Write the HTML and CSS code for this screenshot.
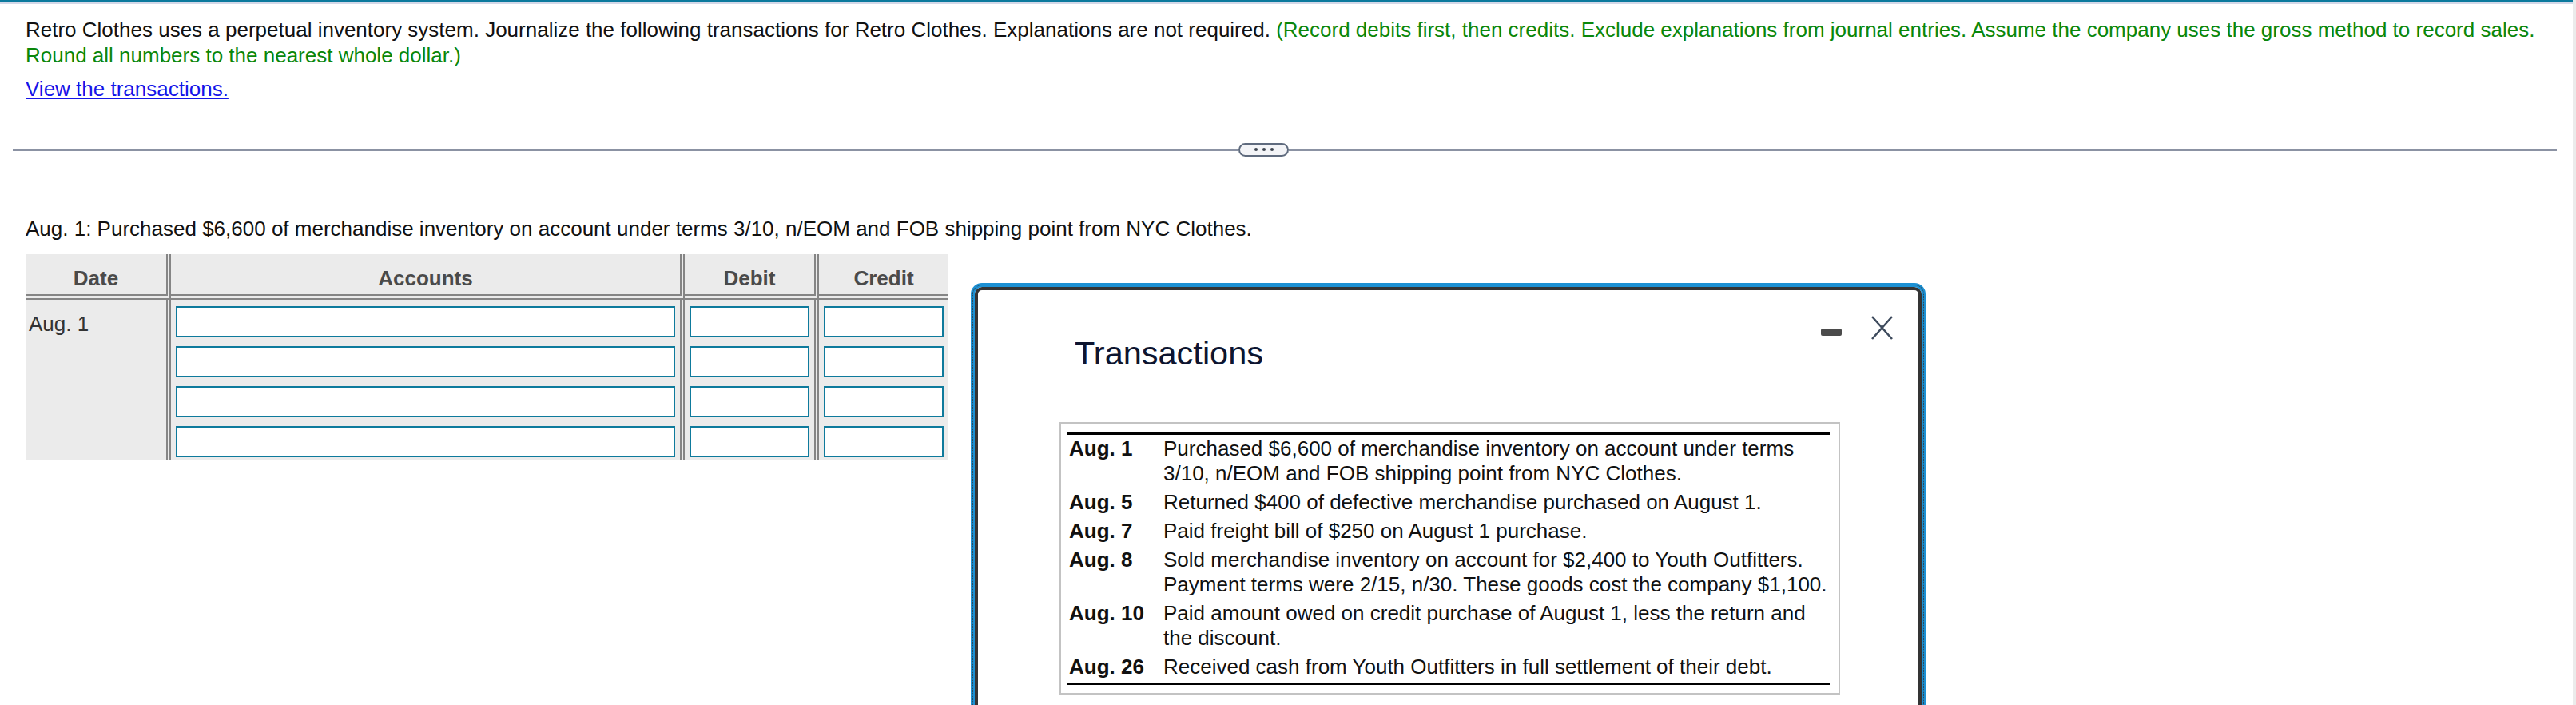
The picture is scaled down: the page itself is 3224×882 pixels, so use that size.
FILE: index.html
```html
<!DOCTYPE html>
<html>
    <head>
        <meta charset="UTF-8">
        <title>Retro Clothes</title>
        <link rel="stylesheet" href="styles.css">
    </head>
    <body>
        <div class="frame">
            <div class="main">
                <div class="topbar"></div>
                <div class="page">
                    <p class="intro">Retro Clothes uses a perpetual inventory system. Journalize the following transactions for Retro Clothes. Explanations are not required. <span class="hint">(Record debits first, then credits. Exclude explanations from journal entries. Assume the company uses the gross method to record sales. Round all numbers to the nearest whole dollar.)</span></p>
                    <p class="viewlink"><a href="#">View the transactions.</a></p>

                    <div class="divider">
                        <span class="divider-line left"></span>
                        <span class="more"><i></i><i></i><i></i></span>
                        <span class="divider-line right"></span>
                    </div>

                    <p class="question">Aug. 1: Purchased $6,600 of merchandise inventory on account under terms 3/10, n/EOM and FOB shipping point from NYC Clothes.</p>

                    <table class="journal">
                        <thead>
                            <tr>
                                <th class="c-date">Date</th>
                                <th class="c-acct">Accounts</th>
                                <th class="c-debit">Debit</th>
                                <th class="c-credit">Credit</th>
                            </tr>
                        </thead>
                        <tbody>
                            <tr>
                                <td class="date-cell" rowspan="4">Aug. 1</td>
                                <td><input type="text"></td>
                                <td><input type="text"></td>
                                <td class="last"><input type="text"></td>
                            </tr>
                            <tr>
                                <td><input type="text"></td>
                                <td><input type="text"></td>
                                <td class="last"><input type="text"></td>
                            </tr>
                            <tr>
                                <td><input type="text"></td>
                                <td><input type="text"></td>
                                <td class="last"><input type="text"></td>
                            </tr>
                            <tr>
                                <td><input type="text"></td>
                                <td><input type="text"></td>
                                <td class="last"><input type="text"></td>
                            </tr>
                        </tbody>
                    </table>
                </div>
            </div>
            <div class="track"></div>
        </div>

        <!-- popup window -->
        <div class="dialog">
            <div class="dialog-head">
                <h2 class="dialog-title">Transactions</h2>
                <div class="win-ctl">
                    <span class="minimize"></span>
                    <svg class="close" width="31" height="30" viewBox="0 0 31 30">
                        <path d="M3 1 L28 29 M28 1 L3 29" stroke="#3e4b5d" stroke-width="2.6" fill="none"/>
                    </svg>
                </div>
            </div>
            <div class="tx-box">
                <table class="tx-list">
                    <tr><td class="tx-date">Aug. 1</td><td>Purchased $6,600 of merchandise inventory on account under terms<br>3/10, n/EOM and FOB shipping point from NYC Clothes.</td></tr>
                    <tr><td class="tx-date">Aug. 5</td><td>Returned $400 of defective merchandise purchased on August 1.</td></tr>
                    <tr><td class="tx-date">Aug. 7</td><td>Paid freight bill of $250 on August 1 purchase.</td></tr>
                    <tr><td class="tx-date">Aug. 8</td><td>Sold merchandise inventory on account for $2,400 to Youth Outfitters.<br>Payment terms were 2/15, n/30. These goods cost the company $1,100.</td></tr>
                    <tr><td class="tx-date">Aug. 10</td><td>Paid amount owed on credit purchase of August 1, less the return and<br>the discount.</td></tr>
                    <tr><td class="tx-date">Aug. 26</td><td>Received cash from Youth Outfitters in full settlement of their debt.</td></tr>
                </table>
            </div>
        </div>
    </body>
</html>
```

FILE: styles.css
```css
html, body{
    margin: 0;
    padding: 0;
}
body{
    font-family: "Liberation Sans", Arial, Helvetica, sans-serif;
    color: #111;
    background: #fff;
    height: 882px;
    overflow: hidden;
    position: relative;
}
.frame{
    display: flex;
    min-height: 882px;
}
.main{
    flex: 1;
}
.track{
    width: 4px;
    background: #ebebeb;
}
.topbar{
    height: 3px;
    background: #0b7a9d;
    border-bottom: 2px solid #d3d8e8;
}
.page{
    padding: 16px 20px 0 32px;
    font-size: 26px;
}
.intro{
    margin: 0;
    line-height: 32px;
}
.hint{
    color: #0a870a;
}
.viewlink{
    margin: 10px 0 0;
    line-height: 32px;
}
.viewlink a{
    color: #1515e8;
}

/* divider with the "..." pill */
.divider{
    display: flex;
    align-items: center;
    height: 16px;
    margin: 52px 0 0 -16px;
}
.divider-line{
    height: 3px;
    background: #8b92a3;
}
.divider-line.left{
    width: 1534px;
}
.divider-line.right{
    flex: 1;
}
.more{
    width: 63px;
    height: 17px;
    box-sizing: border-box;
    border: 2px solid #5f6b7e;
    border-radius: 9px;
    background: #f3f4f7;
    display: flex;
    justify-content: center;
    align-items: center;
    gap: 6px;
}
.more i{
    width: 4px;
    height: 4px;
    border-radius: 50%;
    background: #3f4652;
}
.question{
    margin: 75px 0 0;
    line-height: 32px;
}

/* journal table */
.journal{
    margin-top: 16px;
    border-collapse: separate;
    border-spacing: 0;
    table-layout: fixed;
    width: 1155px;
    background: #ebebeb;
    font-size: 26px;
}
.journal th, .journal td{
    box-sizing: border-box;
    border-right: 6px double #858585;
    padding: 0;
}
.journal th{
    height: 57px;
    padding-top: 10px;
    border-bottom: 7px double #858585;
    color: #4a4a4a;
    font-weight: bold;
    text-align: center;
}
.journal .c-date{ width: 182px; }
.journal .c-acct{ width: 643px; }
.journal .c-debit{ width: 168px; }
.journal .c-credit{ width: 162px; border-right: none; }
.journal td{
    height: 50px;
    padding: 8px 6px 3px;
    vertical-align: top;
}
.journal td.last{
    border-right: none;
}
.journal td.date-cell{
    padding: 15px 0 0 4px;
    line-height: 30px;
    color: #333;
}
.journal input{
    display: block;
    width: 100%;
    height: 39px;
    box-sizing: border-box;
    margin: 0;
    border: 2px solid #0e7a9c;
    background: #fff;
}

/* transactions window */
.dialog{
    position: absolute;
    left: 1215px;
    top: 354px;
    width: 1195px;
    height: 600px;
    box-sizing: border-box;
    border: 5px solid #1c90d3;
    border-radius: 14px;
    box-shadow: inset 0 0 0 4px #343434;
    outline: 1px dotted #333;
    outline-offset: -3px;
    background: #fff;
}
.dialog-head{
    display: flex;
    align-items: flex-start;
    padding: 36px 34px 0 125px;
}
.dialog-title{
    flex: 1;
    margin: 23px 0 0;
    font-size: 41.5px;
    font-weight: normal;
    line-height: 48px;
    color: #0d1530;
}
.win-ctl{
    display: flex;
    align-items: flex-start;
    gap: 35px;
}
.minimize{
    width: 26px;
    height: 9px;
    margin-top: 16px;
    border-radius: 2px;
    background: #4b4b4b;
}
.close{
    display: block;
}
.tx-box{
    width: 977px;
    box-sizing: border-box;
    margin: 62px 0 0 106px;
    padding: 11px 11px 10px 8px;
    border: 2px solid #c3c3c3;
}
.tx-list{
    width: 100%;
    border-collapse: collapse;
    border-top: 3px solid #000;
    border-bottom: 3px solid #000;
    font-size: 26px;
    line-height: 31px;
    color: #111;
}
.tx-list td{
    padding: 0 0 5px;
    vertical-align: top;
    white-space: nowrap;
}
.tx-list tr:first-child td{
    padding-top: 2px;
}
.tx-list tr:last-child td{
    padding-bottom: 4px;
}
.tx-list .tx-date{
    width: 118px;
    padding-left: 2px;
    font-weight: bold;
}
```
